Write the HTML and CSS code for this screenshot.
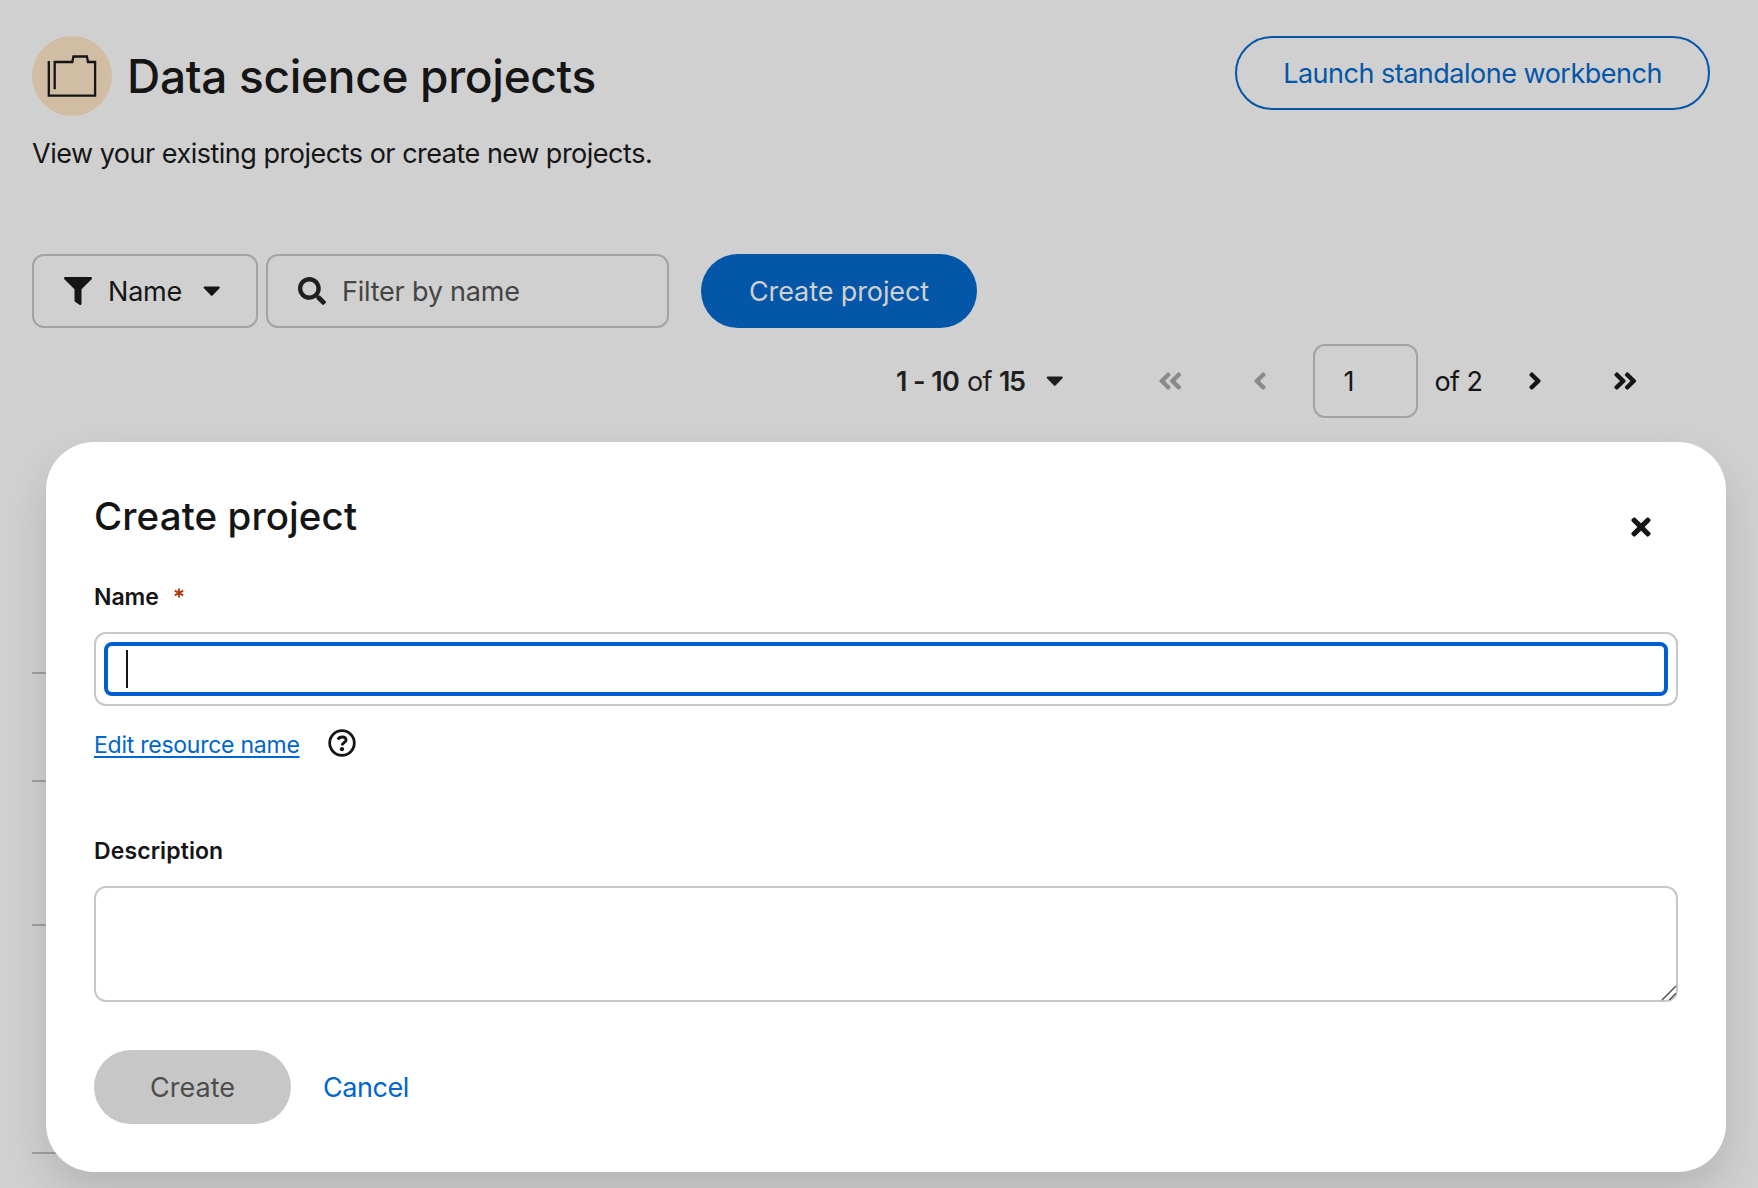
FILE: index.html
```html
<!DOCTYPE html>
<html lang="en">
<head>
<meta charset="utf-8">
<title>Data science projects</title>
<link rel="stylesheet" href="styles.css">
</head>
<body>
<svg class="defs" aria-hidden="true">
  <symbol id="angle" viewBox="0 0 256 512"><path d="M224.3 273l-136 136c-9.4 9.4-24.6 9.4-33.9 0l-22.6-22.6c-9.4-9.4-9.4-24.6 0-33.9l96.4-96.4-96.4-96.4c-9.4-9.4-9.4-24.6 0-33.9L54.3 103c9.4-9.4 24.6-9.4 33.9 0l136 136c9.5 9.4 9.5 24.6.1 34z"/></symbol>
  <symbol id="angles" viewBox="0 0 448 512"><path id="a" d="M224.3 273l-136 136c-9.4 9.4-24.6 9.4-33.9 0l-22.6-22.6c-9.4-9.4-9.4-24.6 0-33.9l96.4-96.4-96.4-96.4c-9.4-9.4-9.4-24.6 0-33.9L54.3 103c9.4-9.4 24.6-9.4 33.9 0l136 136c9.5 9.4 9.5 24.6.1 34z"/><use href="#a" x="192"/></symbol>
  <symbol id="caret" viewBox="0 0 320 512"><path d="M31.3 192h257.3c17.8 0 26.7 21.5 14.1 34.1L174.1 354.8c-7.8 7.8-20.5 7.8-28.3 0L17.2 226.1C4.6 213.5 13.5 192 31.3 192z"/></symbol>
</svg>

<main class="page">
  <header class="header">
    <div class="heading">
      <svg class="project-icon" viewBox="0 0 80 80"><circle cx="40" cy="40" r="40"/><path d="M16.8 25V59.7H63.1V26H56L54.9 20.5H41.4L40.3 26H22.7V53.2"/></svg>
      <h1>Data science projects</h1>
    </div>
    <button class="btn outline">Launch standalone workbench</button>
  </header>
  <p class="intro">View your existing projects or create new projects.</p>

  <div class="toolbar">
    <button class="control toggle">
      <svg class="i28" viewBox="0 0 512 512"><path d="M487.976 0H24.028C2.71 0-8.047 25.866 7.058 40.971L192 225.941V432c0 7.831 3.821 15.17 10.237 19.662l80 55.98C298.02 518.69 320 507.493 320 487.98V225.941l184.947-184.97C520.021 25.896 509.338 0 487.976 0z"/></svg>
      <span class="toggle-text">Name</span>
      <svg class="caret"><use href="#caret"/></svg>
    </button>
    <label class="control search">
      <svg class="i28" viewBox="0 0 512 512"><path d="M505 442.7L405.3 343c-4.5-4.5-10.6-7-17-7H372c27.6-35.3 44-79.7 44-128C416 93.1 322.9 0 208 0S0 93.1 0 208s93.1 208 208 208c48.3 0 92.7-16.4 128-44v16.3c0 6.4 2.5 12.5 7 17l99.7 99.7c9.4 9.4 24.6 9.4 33.9 0l28.3-28.3c9.4-9.4 9.4-24.6.1-34zM208 336c-70.7 0-128-57.2-128-128 0-70.7 57.2-128 128-128 70.7 0 128 57.2 128 128 0 70.7-57.2 128-128 128z"/></svg>
      <span>Filter by name</span>
    </label>
    <button class="btn primary">Create project</button>
  </div>

  <nav class="pagination">
    <div class="range"><b>1 - 10</b><span>of</span><b class="total">15</b><svg class="caret"><use href="#caret"/></svg></div>
    <svg class="double back"><use href="#angles"/></svg>
    <svg class="single back"><use href="#angle"/></svg>
    <div class="control page-input"><span>1</span></div>
    <span class="of-pages">of 2</span>
    <svg class="single next"><use href="#angle"/></svg>
    <svg class="double"><use href="#angles"/></svg>
  </nav>

  <div class="table">
    <div class="row head"></div>
    <div class="row short"></div>
    <div class="row"></div>
    <div class="row tall"></div>
  </div>
</main>

<section class="modal" role="dialog">
  <div class="modal-head">
    <h2>Create project</h2>
    <svg class="close" viewBox="0 0 352 512"><path d="M242.72 256l100.07-100.07c12.28-12.28 12.28-32.19 0-44.48l-22.24-22.24c-12.28-12.28-32.19-12.28-44.48 0L176 189.28 75.93 89.21c-12.28-12.28-32.19-12.28-44.48 0L9.21 111.45c-12.28 12.28-12.28 32.19 0 44.48L109.28 256 9.21 356.07c-12.28 12.28-12.28 32.19 0 44.48l22.24 22.24c12.28 12.28 32.2 12.28 44.48 0L176 322.72l100.07 100.07c12.28 12.28 32.2 12.28 44.48 0l22.24-22.24c12.28-12.28 12.28-32.19 0-44.48L242.72 256z"/></svg>
  </div>
  <div class="label">Name<svg class="required" viewBox="0 0 10 10"><path d="M5 .4V9.6M.8 2.6L9.2 7.4M9.2 2.6L.8 7.4"/></svg></div>
  <div class="field"><div class="focus"><span class="cursor"></span></div></div>
  <div class="resource">
    <a>Edit resource name</a>
    <svg class="help" viewBox="0 0 28 28"><circle cx="14" cy="14" r="12.3"/><path d="M9.9 10.5C10.8 8.7 12.2 8 14.2 8C16.6 8 18.1 9.3 18.1 11.1C18.1 13.6 14.4 13.4 14.1 16.3"/><circle class="dot" cx="14" cy="20.2" r="2.1"/></svg>
  </div>
  <div class="label description">Description</div>
  <div class="field area"><svg class="grip" viewBox="0 0 16 16"><path d="M1 15L15 1M8.3 15L15 8.3"/></svg></div>
  <div class="actions">
    <button class="btn disabled">Create</button>
    <button class="link">Cancel</button>
  </div>
</section>
</body>
</html>
```
FILE: styles.css
```css
* { box-sizing: border-box; }

body {
  margin: 0;
  height: 1188px;
  overflow: hidden;
  position: relative;
  background: #d0d0d0;
  color: #151515;
  font: 400 27px/36px Inter, sans-serif;
}

h1, h2, p { margin: 0; font-weight: 500; }
svg { display: block; flex: none; fill: currentColor; }
button { margin: 0; padding: 0; border: 0; background: none; color: inherit; font: inherit; }

.defs { position: absolute; width: 0; height: 0; }

.page { padding: 36px 48px 0 32px; }

.header { display: flex; justify-content: space-between; align-items: flex-start; height: 80px; }
.heading { display: flex; align-items: center; }
.project-icon { width: 80px; height: 80px; fill: #d0bda4; }
.project-icon path { fill: none; stroke: #151515; stroke-width: 2.3; }
h1 { margin-left: 15px; font-size: 46px; line-height: 60px; letter-spacing: -.3px; }

.btn { height: 74px; padding-top: 2px; border-radius: 37px; text-align: center; white-space: nowrap; }
.outline { width: 475px; border: 2px solid #0356a8; color: #0356a8; letter-spacing: -.5px; }
.primary { width: 276px; margin-left: 32px; background: #0356a8; color: #d0d0d0; letter-spacing: -.1px; }
.disabled { width: 197px; background: #c7c7c7; color: #4d4d4d; }

.intro { margin-top: 20px; font-weight: 400; letter-spacing: -.49px; }

.toolbar { display: flex; margin-top: 82px; }
.control {
  display: flex;
  align-items: center;
  height: 74px;
  border: 2px solid #a3a3a3;
  border-radius: 12px;
}
.control span { padding-top: 1px; }
.i28 { width: 28px; height: 28px; }
.caret { width: 17.5px; height: 28px; margin-top: -2px; }
.toggle { width: 226px; padding-left: 30px; }
.toggle-text { width: 95px; margin-left: 16px; text-align: left; letter-spacing: -.2px; }
.search { width: 403px; margin-left: 8px; padding-left: 30px; color: #1f1f1f; }
.search span { margin-left: 16px; color: #444; letter-spacing: -.22px; }

.pagination { display: flex; align-items: center; margin-top: 16px; padding-left: 864px; height: 74px; }
.range { display: flex; align-items: center; width: 262px; color: #1f1f1f; letter-spacing: -.6px; }
.range b, .range span { padding-top: 1px; }
.range b { width: 71px; font-weight: 600; }
.range b + span { width: 32px; }
.range .total { width: 47px; letter-spacing: -1.4px; }
.single { width: 14px; height: 28px; }
.double { width: 24.5px; height: 28px; }
.back { transform: scaleX(-1); color: #8a8a8a; }
.double.back { margin-right: 70px; }
.page-input { width: 105px; margin-left: 46px; padding-left: 29px; }
.of-pages { width: 94px; margin-left: 16px; padding: 1px 0 0 1px; letter-spacing: -.6px; }
.next { margin-right: 71px; }

.table { margin-top: 24px; }
.row { height: 144px; border-bottom: 2px solid #9f9f9f; }
.row.head { height: 232px; }
.row.short { height: 108px; }
.row.tall { height: 228px; }

.modal {
  position: absolute;
  left: 46px;
  top: 442px;
  width: 1680px;
  height: 730px;
  padding: 48px;
  border-radius: 48px;
  background: #fff;
  box-shadow: 0 20px 42px rgba(0, 0, 0, .13);
}
.modal-head { display: flex; justify-content: space-between; }
h2 { font-size: 38.5px; line-height: 52px; letter-spacing: .1px; }
.close { width: 20px; height: 28px; margin: 23px 27px 0 0; }

.label { display: flex; margin-top: 39px; font-size: 23px; line-height: 32px; font-weight: 600; letter-spacing: -.05px; }
.required { width: 10px; height: 10px; margin: 7px 0 0 15px; fill: none; stroke: #b1380b; stroke-width: 1.8; }
.field { height: 74px; margin-top: 19px; padding: 8px; border: 2px solid #c7c7c7; border-radius: 12px; }
.focus { height: 54px; padding: 4px 18px; border: 4px solid #005fd0; border-radius: 8px; }
.cursor { display: block; width: 2px; height: 38px; background: #151515; }

.resource { display: flex; align-items: center; height: 32px; margin-top: 21px; font-size: 23px; line-height: 32px; }
.resource a { padding-top: 3px; color: #0066cc; letter-spacing: -.25px; text-decoration: underline; text-decoration-thickness: 2px; text-underline-offset: 3px; }
.help { width: 28px; height: 28px; margin-left: 28px; fill: none; stroke: #151515; stroke-width: 2.8; }
.help .dot { fill: #151515; stroke: none; }

.label.description { margin-top: 76px; letter-spacing: .1px; }
.area { display: flex; align-items: flex-end; justify-content: flex-end; height: 116px; padding: 0; }
.grip { width: 16px; height: 16px; margin-right: -1px; margin-bottom: -1px; fill: none; stroke: #555; stroke-width: 1.5; }

.actions { display: flex; margin-top: 48px; }
.link { margin-left: 32px; padding-top: 2px; color: #0066cc; letter-spacing: -.45px; }
```
